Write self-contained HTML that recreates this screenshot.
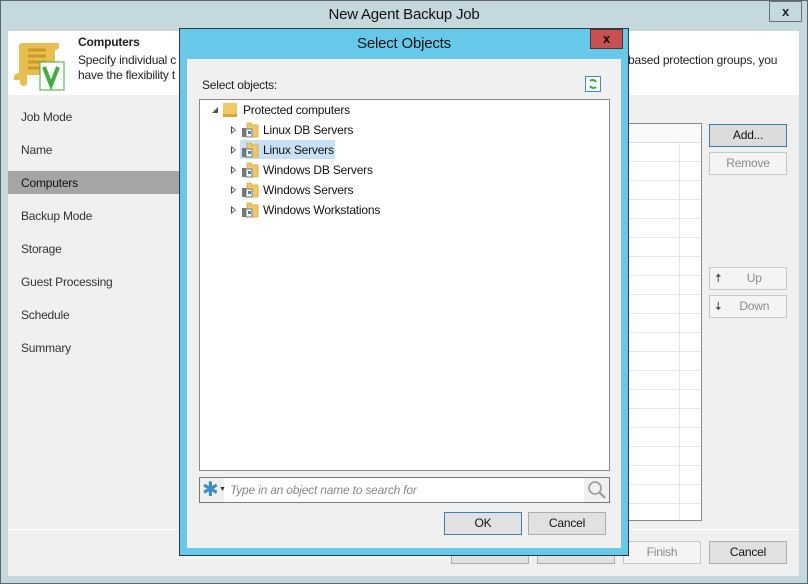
<!DOCTYPE html>
<html><head><meta charset="utf-8"><style>
*{box-sizing:border-box;margin:0;padding:0}
body{width:808px;height:584px;overflow:hidden;background:#c5d8de;font-family:"Liberation Sans",sans-serif;font-size:12px;color:#222;position:relative;letter-spacing:-0.2px}
.a{position:absolute}
.btn{position:absolute;border:1px solid #adadad;background:#e1e1e1;text-align:center;line-height:20px;font-size:12px;color:#111}
.dis{background:#f4f4f4;border-color:#c8c8c8;color:#8a8a8a}
.nav{position:absolute;left:21px;font-size:12px;color:#333}
.row{position:absolute;left:0;width:281px;height:19px;border-bottom:1px solid #e6e6e6}
.ti{position:absolute;height:19px;line-height:19px;font-size:12px;color:#111}
.tri{position:absolute;width:0;height:0;border-top:4px solid transparent;border-bottom:4px solid transparent;border-left:5px solid #444}
.tri:after{content:"";position:absolute;left:-4px;top:-2px;border-top:2px solid transparent;border-bottom:2px solid transparent;border-left:3px solid #fff}
</style></head><body>
<div class="a" style="left:0;top:0;width:808px;height:584px;border:1px solid #5a6670"></div>
<div class="a" style="left:0;top:6px;width:808px;text-align:center;font-size:15px;color:#111">New Agent Backup Job</div>
<div class="a" style="left:769px;top:1px;width:33px;height:21px;border:1px solid #6a7075;text-align:center;font-weight:bold;font-size:13px;line-height:19px">x</div>
<div class="a" style="left:8px;top:31px;width:791px;height:545px;background:#f0f0f0"></div>
<div class="a" style="left:8px;top:31px;width:791px;height:64px;background:#fff"></div>
<svg class="a" style="left:13px;top:40px" width="54" height="52"><path d="M10 3h36v4c0 3-4 3-4 3v25H14v8c0 4-6 4-7 0v-3H1v-3c0-4 5-4 5-4V6c0-3 4-3 4-3z" fill="#e8bf4e"/><path d="M15 10h18M15 16h18M15 22h18M15 28h12" stroke="#c99a2a" stroke-width="3"/><rect x="27" y="22" width="24" height="28" fill="#fff" stroke="#3fae3f"/><path d="M31 27l7 18 7-18" stroke="#3fae3f" stroke-width="4" fill="none"/></svg>
<div class="a" style="left:78px;top:35px;font-weight:bold;font-size:12px">Computers</div>
<div class="a" style="left:78px;top:53px">Specify individual c</div>
<div class="a" style="left:78px;top:68px">have the flexibility t</div>
<div class="a" style="left:628px;top:53px">based protection groups, you</div>
<div class="nav" style="top:110px">Job Mode</div>
<div class="nav" style="top:143px">Name</div>
<div class="a" style="left:8px;top:171px;width:172px;height:23px;background:#a5a5a5"></div>
<div class="nav" style="top:176px;color:#111">Computers</div>
<div class="nav" style="top:209px">Backup Mode</div>
<div class="nav" style="top:242px">Storage</div>
<div class="nav" style="top:275px">Guest Processing</div>
<div class="nav" style="top:308px">Schedule</div>
<div class="nav" style="top:341px">Summary</div>
<div class="a" style="left:8px;top:529px;width:791px;height:1px;background:#fff"></div>
<div class="a" style="left:420px;top:123px;width:282px;height:398px;background:#fff;border:1px solid #8a8a8a;overflow:hidden">
<div class="a" style="left:258px;top:0;width:1px;height:400px;background:#e6e6e6"></div>
<div class="row" style="top:0;background:#fafafa;border-bottom-color:#ddd"></div>
<div class="row" style="top:19px"></div><div class="row" style="top:38px"></div><div class="row" style="top:57px"></div><div class="row" style="top:76px"></div><div class="row" style="top:95px"></div><div class="row" style="top:114px"></div><div class="row" style="top:133px"></div><div class="row" style="top:152px"></div><div class="row" style="top:171px"></div><div class="row" style="top:190px"></div><div class="row" style="top:209px"></div><div class="row" style="top:228px"></div><div class="row" style="top:247px"></div><div class="row" style="top:266px"></div><div class="row" style="top:285px"></div><div class="row" style="top:304px"></div><div class="row" style="top:323px"></div><div class="row" style="top:342px"></div><div class="row" style="top:361px"></div>
</div>
<div class="btn" style="left:709px;top:124px;width:78px;height:23px;border-color:#3c7fb1;background:#dcdcdc">Add...</div>
<div class="btn dis" style="left:709px;top:152px;width:78px;height:23px">Remove</div>
<div class="btn dis" style="left:709px;top:267px;width:78px;height:23px">&nbsp;&nbsp;&nbsp;&nbsp;Up<span style="position:absolute;left:5px;top:0;color:#555">🠅</span></div>
<div class="btn dis" style="left:709px;top:295px;width:78px;height:23px">&nbsp;&nbsp;&nbsp;&nbsp;Down<span style="position:absolute;left:5px;top:0;color:#555">🠇</span></div>
<div class="btn" style="left:451px;top:541px;width:78px;height:23px">Previous</div>
<div class="btn" style="left:537px;top:541px;width:78px;height:23px">Next</div>
<div class="btn dis" style="left:623px;top:541px;width:78px;height:23px">Finish</div>
<div class="btn" style="left:709px;top:541px;width:78px;height:23px">Cancel</div>

<!-- dialog -->
<div class="a" style="left:179px;top:28px;width:450px;height:528px;background:#66c9e9;border:1px solid #2d3a40"></div>
<div class="a" style="left:179px;top:35px;width:450px;text-align:center;font-size:15px;color:#111">Select Objects</div>
<div class="a" style="left:590px;top:29px;width:33px;height:20px;background:#c75050;border:1px solid #5a3030;text-align:center;font-weight:bold;font-size:13px;line-height:17px;color:#111">x</div>
<div class="a" style="left:187px;top:59px;width:434px;height:489px;background:#f0f0f0"></div>
<div class="a" style="left:202px;top:78px">Select objects:</div>
<svg class="a" style="left:585px;top:76px" width="16" height="16"><rect x=".5" y=".5" width="15" height="15" fill="#fff" stroke="#3c8dc6"/><path d="M5 5a4 4 0 0 1 6 1M11 11a4 4 0 0 1-6-1" stroke="#3caa3c" stroke-width="2" fill="none"/></svg>
<div class="a" style="left:199px;top:99px;width:411px;height:372px;background:#fff;border:1px solid #8a8a8a"></div>
<div class="a" style="left:212px;top:107px;width:0;height:0;border-left:6px solid transparent;border-bottom:6px solid #555"></div>
<div class="a" style="left:223px;top:103px;width:14px;height:14px;background:#f2c768;border-bottom:3px solid #e0a830"></div>
<div class="ti" style="left:243px;top:101px">Protected computers</div>
<div class="a" style="left:240px;top:140px;width:95px;height:19px;background:#c6e1f8"></div>
<div class="tri" style="left:231px;top:126px"></div><div class="tri" style="left:231px;top:146px"></div><div class="tri" style="left:231px;top:166px"></div><div class="tri" style="left:231px;top:186px"></div><div class="tri" style="left:231px;top:206px"></div>
<svg class="a" style="left:241px;top:122px" width="18" height="100">
<g id="ic"><path d="M6 1h4l1 2h6v12H6z" fill="#f2c768" stroke="#d9a534" stroke-width=".8"/><rect x="1" y="6" width="4" height="9" fill="#777"/><rect x="5" y="7" width="6" height="8" fill="#fff" stroke="#777"/><rect x="7" y="9" width="3" height="3" fill="#2f8ad0"/></g>
<use href="#ic" y="20"/><use href="#ic" y="40"/><use href="#ic" y="60"/><use href="#ic" y="80"/></svg>
<div class="ti" style="left:263px;top:121px">Linux DB Servers</div>
<div class="ti" style="left:263px;top:141px">Linux Servers</div>
<div class="ti" style="left:263px;top:161px">Windows DB Servers</div>
<div class="ti" style="left:263px;top:181px">Windows Servers</div>
<div class="ti" style="left:263px;top:201px">Windows Workstations</div>
<div class="a" style="left:199px;top:477px;width:411px;height:26px;background:#fff;border:1px solid #7a7a7a"></div>
<div class="a" style="left:200px;top:478px;width:24px;height:24px;background:#f0f0f0;color:#3c8dc6;font-size:20px;line-height:24px;padding-left:2px">✱<span style="position:absolute;left:19px;top:0;font-size:7px;color:#333">▼</span></div>
<div class="a" style="left:230px;top:483px;font-style:italic;color:#888">Type in an object name to search for</div>
<div class="a" style="left:584px;top:478px;width:25px;height:24px;background:#f0f0f0"></div>
<svg class="a" style="left:587px;top:480px" width="20" height="20"><circle cx="8" cy="8" r="6" fill="none" stroke="#999" stroke-width="1.6"/><path d="M12 12l6 6" stroke="#999" stroke-width="2.2"/></svg>
<div class="btn" style="left:444px;top:512px;width:78px;height:23px;border-color:#3c7fb1">OK</div>
<div class="btn" style="left:528px;top:512px;width:78px;height:23px">Cancel</div>
</body></html>
